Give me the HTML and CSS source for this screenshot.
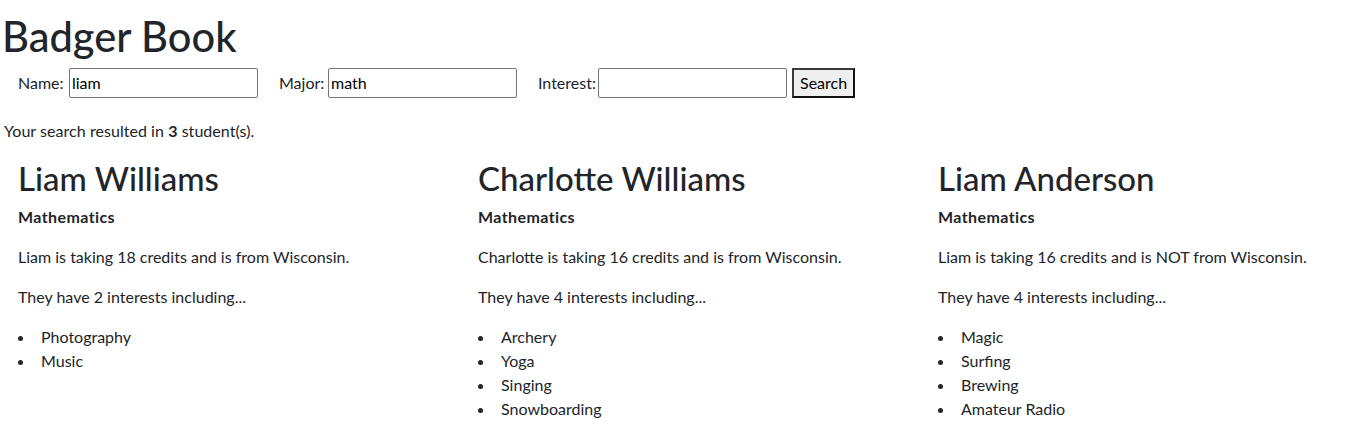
FILE: index.html
```html
<!DOCTYPE html>
<html lang="en">
<head>
<meta charset="utf-8">
<title>Badger Book</title>
<link rel="stylesheet" href="styles.css">
</head>
<body>
<div class="app">
  <h1 class="title">Badger Book</h1>
  <form class="search">
    <label class="lbl lbl-name" for="name">Name:</label>
    <input class="field" id="name" type="text" value="liam">
    <label class="lbl lbl-major" for="major">Major:</label>
    <input class="field" id="major" type="text" value="math">
    <label class="lbl lbl-interest" for="interest">Interest:</label>
    <input class="field" id="interest" type="text" value="">
    <button class="btn" type="button">Search</button>
  </form>
  <p class="summary">Your search resulted in <strong>3</strong> student(s).</p>
  <div class="results">
    <div class="student">
      <h2 class="name">Liam Williams</h2>
      <p><strong class="major">Mathematics</strong></p>
      <p>Liam is taking 18 credits and is from Wisconsin.</p>
      <p>They have 2 interests including...</p>
      <ul class="interests">
        <li>Photography</li>
        <li>Music</li>
      </ul>
    </div>
    <div class="student">
      <h2 class="name">Charlotte Williams</h2>
      <p><strong class="major">Mathematics</strong></p>
      <p>Charlotte is taking 16 credits and is from Wisconsin.</p>
      <p>They have 4 interests including...</p>
      <ul class="interests">
        <li>Archery</li>
        <li>Yoga</li>
        <li>Singing</li>
        <li>Snowboarding</li>
      </ul>
    </div>
    <div class="student">
      <h2 class="name">Liam Anderson</h2>
      <p><strong class="major">Mathematics</strong></p>
      <p>Liam is taking 16 credits and is NOT from Wisconsin.</p>
      <p>They have 4 interests including...</p>
      <ul class="interests">
        <li>Magic</li>
        <li>Surfing</li>
        <li>Brewing</li>
        <li>Amateur Radio</li>
      </ul>
    </div>
  </div>
</div>
</body>
</html>
```
FILE: styles.css
```css
* { box-sizing: border-box; }

body {
  margin: 0;
  font-family: Lato, "Open Sans", sans-serif;
  font-size: 16px;
  line-height: 1.5;
  color: #212529;
  background: #fff;
}

.app {
  padding-top: 12px;
}

.title {
  margin: 0 0 8px 0;
  padding-left: 2px;
  font-size: 41.6px;
  font-weight: 500;
  line-height: 48px;
}

.search {
  display: flex;
  align-items: center;
  height: 30px;
  margin: 0 0 21px 0;
}

.lbl {
  display: block;
  padding-bottom: 1px;
  color: #212529;
}

.lbl-name { margin-left: 18px; width: 51px; }
.lbl-major { margin-left: 21px; width: 49px; }
.lbl-interest { margin-left: 21px; width: 60px; }

.field {
  width: 189px;
  height: 30px;
  padding: 0 2px 1px 2px;
  border: 1px solid #767676;
  border-radius: 2px;
  font-family: inherit;
  font-size: 16px;
  color: #000;
  background: #fff;
}

.btn {
  margin-left: 5px;
  width: 63px;
  height: 30px;
  padding: 0 6px 1px 6px;
  border: 2px solid;
  border-color: #3b3b3b #101010 #101010 #3b3b3b;
  background: #efefef;
  font-family: inherit;
  font-size: 16px;
  color: #000;
}

.summary {
  margin: 0 0 16px 0;
  padding-left: 4px;
  letter-spacing: 0.05px;
}

.results {
  display: grid;
  grid-template-columns: 448px 448px 1fr;
  column-gap: 12px;
  padding: 0 0 0 18px;
}

.student p {
  margin: 0 0 16px 0;
}

.major {
  letter-spacing: 0.4px;
}

.name {
  margin: 0 0 8px 0;
  font-size: 33px;
  font-weight: 500;
  line-height: 38px;
}

.interests {
  margin: 0;
  padding-left: 23px;
  list-style: none;
}

.interests li::before {
  content: "";
  display: inline-block;
  width: 5px;
  height: 5px;
  margin-left: -23px;
  margin-right: 18px;
  border-radius: 50%;
  background: #212529;
  vertical-align: middle;
}
```
